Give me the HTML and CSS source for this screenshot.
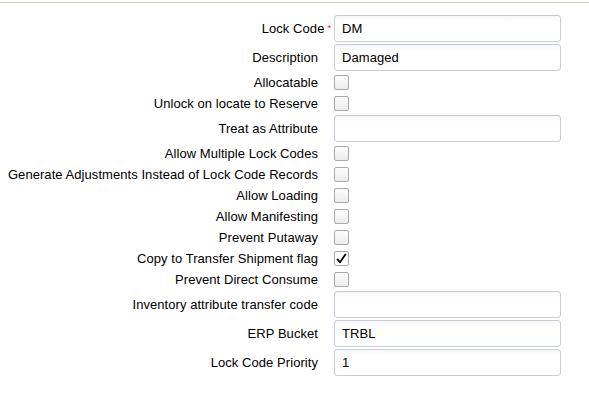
FILE: index.html
```html
<!DOCTYPE html>
<html lang="en">
<head>
    <title>Lock Code</title>
    <link rel="stylesheet" href="styles.css">
</head>
<body>
<div class="top-rule"></div>
<form class="lock-form">
    <div class="row text-row required">
        <label class="label">Lock Code<span class="star">*</span></label>
        <input class="field" type="text" value="DM">
    </div>
    <div class="row text-row">
        <label class="label">Description</label>
        <input class="field" type="text" value="Damaged">
    </div>
    <div class="row check-row">
        <label class="label">Allocatable</label>
        <span class="check"></span>
    </div>
    <div class="row check-row">
        <label class="label">Unlock on locate to Reserve</label>
        <span class="check"></span>
    </div>
    <div class="row text-row">
        <label class="label">Treat as Attribute</label>
        <input class="field" type="text" value="">
    </div>
    <div class="row check-row">
        <label class="label">Allow Multiple Lock Codes</label>
        <span class="check"></span>
    </div>
    <div class="row check-row">
        <label class="label">Generate Adjustments Instead of Lock Code Records</label>
        <span class="check"></span>
    </div>
    <div class="row check-row">
        <label class="label">Allow Loading</label>
        <span class="check"></span>
    </div>
    <div class="row check-row">
        <label class="label">Allow Manifesting</label>
        <span class="check"></span>
    </div>
    <div class="row check-row">
        <label class="label">Prevent Putaway</label>
        <span class="check"></span>
    </div>
    <div class="row check-row">
        <label class="label">Copy to Transfer Shipment flag</label>
        <span class="check checked">
            <svg width="13" height="13" viewBox="0 0 13 13">
                <path d="M2.6 7.4 L5 10.3 L10.4 2.6" fill="none" stroke="#000" stroke-width="1.8" stroke-linecap="round" stroke-linejoin="round"/>
            </svg>
        </span>
    </div>
    <div class="row check-row">
        <label class="label">Prevent Direct Consume</label>
        <span class="check"></span>
    </div>
    <div class="row text-row">
        <label class="label">Inventory attribute transfer code</label>
        <input class="field" type="text" value="">
    </div>
    <div class="row text-row">
        <label class="label">ERP Bucket</label>
        <input class="field" type="text" value="TRBL">
    </div>
    <div class="row text-row">
        <label class="label">Lock Code Priority</label>
        <input class="field" type="text" value="1">
    </div>
</form>
</body>
</html>
```

FILE: styles.css
```css
body, html {
    margin: 0;
    background-color: #fff;
    font-family: "Liberation Sans", Arial, sans-serif;
    font-size: 13px;
    letter-spacing: 0.06px;
    color: #000;
}

.top-rule {
    margin-top: 2px;
    height: 1px;
    background-color: #cfcdbb;
}

.lock-form {
    display: flex;
    flex-direction: column;
    padding-top: 11px;
}

.row {
    display: flex;
    align-items: center;
    gap: 16px;
}

.text-row {
    height: 29px;
}

.check-row {
    height: 21px;
}

.label {
    width: 318px;
    flex-shrink: 0;
    text-align: right;
    white-space: nowrap;
}

.required .label {
    width: 331px;
    margin-right: -13px;
}

.label .star {
    color: #e02020;
    font-size: 9px;
    margin-left: 3px;
    vertical-align: 2px;
}

.field {
    box-sizing: border-box;
    width: 227px;
    height: 27px;
    margin: 0;
    padding: 0 7px;
    border: 1px solid #c6cdd8;
    border-radius: 3px;
    background: linear-gradient(#f7f7f7, #fff 6px);
    font-family: inherit;
    font-size: 13px;
    letter-spacing: 0.06px;
    color: #000;
    outline: none;
}

.check {
    box-sizing: border-box;
    width: 15px;
    height: 15px;
    border: 1px solid #a9a9a9;
    border-radius: 2px;
    background: linear-gradient(#fdfdfd, #ececec);
    display: flex;
    align-items: center;
    justify-content: center;
}

.check.checked {
    background: #fff;
}
```
